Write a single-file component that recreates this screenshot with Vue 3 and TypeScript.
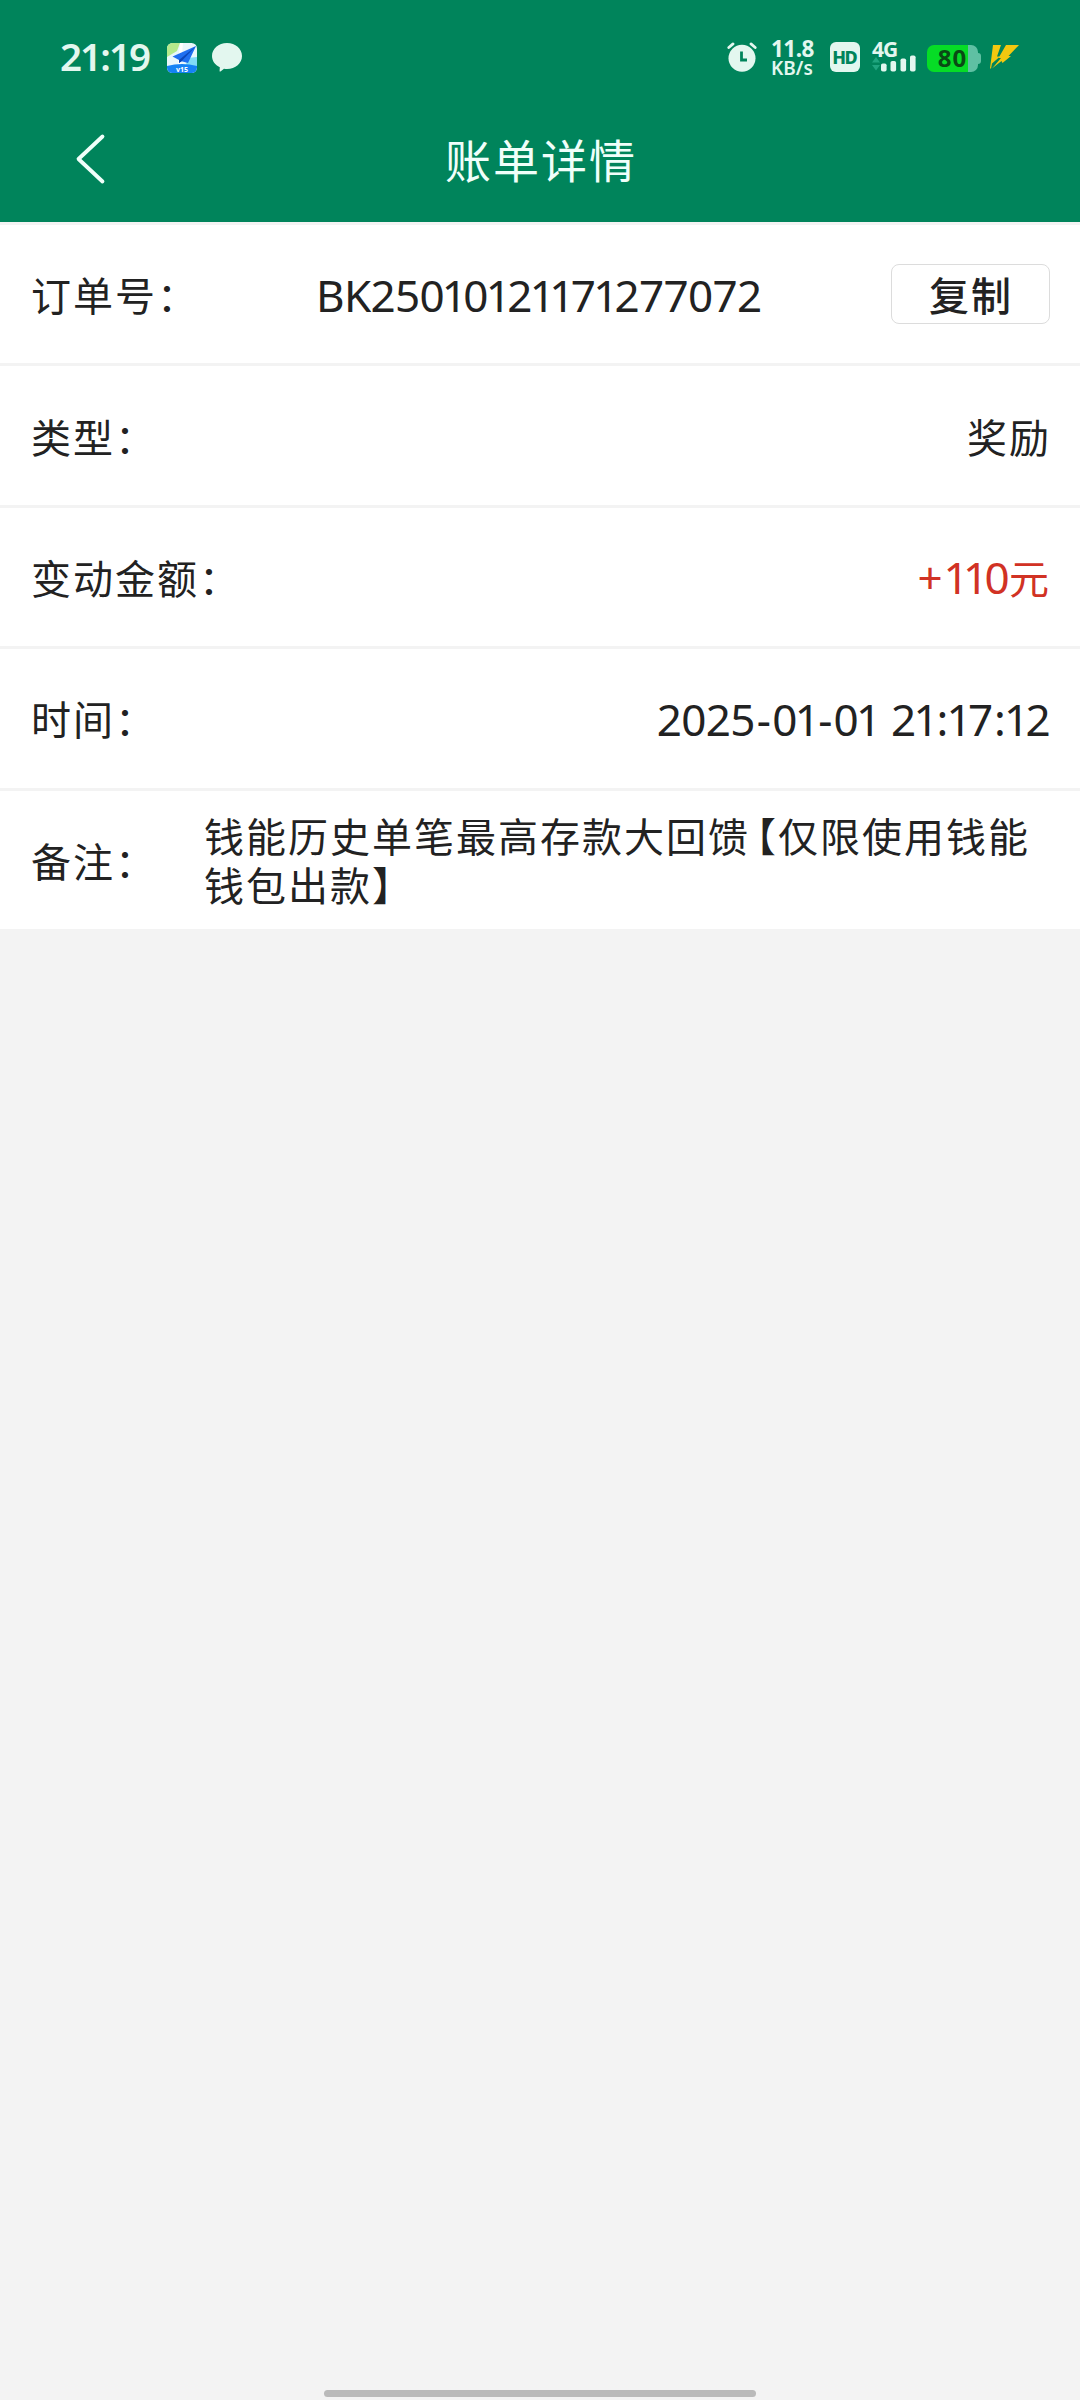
<script setup lang="ts">
interface Glyph {
  char: string
  kind: string[]
}

interface Row {
  label: string
  value: string
  tone?: 'red'
}

// Proportional figures: "1" takes a narrower advance, punctuation a wider one.
function glyphs(text: string): Glyph[] {
  const chars = Array.from(text)
  return chars.map((char, i) => {
    const kind: string[] = []
    if (char === '1') kind.push(chars[i + 1] === '1' ? 'one-one' : 'one')
    else if (/[0-9]/.test(char) && chars[i + 1] === '1') kind.push('before-one')
    if (char === '-') kind.push('dash')
    if (char === ':') kind.push('colon')
    if (char === ' ') kind.push('space')
    if (char === '+') kind.push('plus')
    if (/[一-龥]/.test(char)) kind.push('cjk')
    return { char, kind }
  })
}

const orderNo = 'BK25010121171277072'
const rows: Row[] = [
  { label: '类型：', value: '奖励' },
  { label: '变动金额：', value: '+110元', tone: 'red' },
  { label: '时间：', value: '2025-01-01 21:17:12' },
]
</script>

<template>
  <div class="screen">
    <header class="top">
      <div class="status">
        <div class="status-left">
          <span class="clock">21:19</span>
          <svg class="app-icon" width="30" height="30" viewBox="0 0 30 30">
            <defs>
              <clipPath id="tile"><rect width="30" height="30" rx="5.500" /></clipPath>
            </defs>
            <g clip-path="url(#tile)">
              <rect width="30" height="30" fill="#e9f7fb" />
              <path d="M0 0h13L10 8 0 14z" fill="#b4ea8c" />
              <path d="M13 0h3l-2 22h-3z" fill="#fff" />
              <path d="M20 15l10-1v9H19z" fill="#7fdcf7" />
              <path d="M0 23q15-4 30 0v7H0z" fill="#1583f5" />
              <path d="M29 3L5.500 13.500l6.500 3.500v3l2.500-1.800L21 20z" fill="#1f6ff0" />
              <path d="M29 3L12 17v3l2.500-1.800z" fill="#0b47b8" />
            </g>
            <text x="15" y="28.600" class="tile-text">v15</text>
          </svg>
          <svg class="bubble" width="30" height="29" viewBox="0 0 30 29">
            <path d="M15 0C23.500 0 30 5.700 30 13S23.500 26 15 26q-1.500 0-3-.3L8.500 28.400q-1 .5-.9-.7l.2-3.500C3.200 22 0 18 0 13 0 5.700 6.500 0 15 0z" fill="#e3f7ef" />
          </svg>
        </div>
        <div class="status-right">
          <svg class="alarm" width="30" height="30" viewBox="0 0 30 30">
            <circle cx="15" cy="16.200" r="13.500" fill="#e3f7ef" />
            <path d="M1.800 5.500L6 1.900M28.200 5.500L24 1.900" stroke="#e3f7ef" stroke-width="2.800" stroke-linecap="round" />
            <path d="M14.500 9.500v8.500H20" stroke="#00845b" stroke-width="2.800" fill="none" />
          </svg>
          <div class="speed">
            <span class="speed-num">11.8</span>
            <span class="speed-unit">KB/s</span>
          </div>
          <div class="hd">HD</div>
          <div class="signal">
            <span class="net">4G</span>
            <svg class="bars" width="44" height="17" viewBox="0 0 44 17">
              <path d="M0 7.500L4 2l4 5.500zM0 10l4 5.500L8 10z" fill="#1fa57f" />
              <g fill="#e3f7ef">
                <rect x="9" y="8.500" width="5.600" height="8" rx="1.800" />
                <rect x="18.500" y="6" width="5.600" height="10.500" rx="1.800" />
                <rect x="28.500" y="3.500" width="5.600" height="13" rx="1.800" />
                <rect x="38" y=".5" width="5.600" height="16" rx="1.800" />
              </g>
            </svg>
          </div>
          <div class="battery">
            <div class="cell"><span class="level">80</span></div>
            <div class="nub"></div>
          </div>
          <svg class="bolt" width="30" height="26" viewBox="0 0 30 26">
            <path d="M4 1h8L8 12.500h3L3 19.500 2 24.500H1z" fill="#f3c80f" />
            <path d="M17 1h13L19.500 12H22l-8.500 7-1-2L3 24.500l9-10.500H9.500z" fill="#f3c80f" />
          </svg>
        </div>
      </div>
      <nav class="nav">
        <svg class="back" width="32" height="54" viewBox="0 0 32 54">
          <path d="M28.500 4.500L4.500 27l24 22.500" fill="none" stroke="#f0fffa" stroke-width="3.800" stroke-linecap="round" stroke-linejoin="round" />
        </svg>
        <h1 class="title">账单详情</h1>
        <span class="nav-end"></span>
      </nav>
    </header>

    <main class="list">
      <section class="row">
        <span class="label">订单号：</span>
        <span class="order"><span v-for="(g, i) in glyphs(orderNo)" :key="i" :class="g.kind">{{ g.char }}</span></span>
        <button class="copy" type="button">复制</button>
      </section>
      <section v-for="row in rows" :key="row.label" class="row">
        <span class="label">{{ row.label }}</span>
        <span class="value" :class="row.tone"><span v-for="(g, i) in glyphs(row.value)" :key="i" :class="g.kind">{{ g.char }}</span></span>
      </section>
      <section class="row">
        <span class="label">备注：</span>
        <p class="remark">钱能历史单笔最高存款大回<span class="tight">馈</span>【仅限使用钱能<br />钱包出款】</p>
      </section>
    </main>

    <footer class="home"><span class="home-bar"></span></footer>
  </div>
</template>

<style>
body {
  background: #f3f3f3;
}
</style>

<style scoped>
.screen {
  display: flex;
  flex-direction: column;
  width: 1080px;
  height: 2400px;
  background: #f3f3f3;
  color: #222;
  font-family: "Noto Sans", "Noto Sans CJK SC", sans-serif;
}

.top {
  height: 222px;
  background: #00845b;
  color: #f0fffa;
}

.status {
  display: flex;
  justify-content: space-between;
  height: 100px;
  padding: 0 61px 0 60px;
  box-sizing: border-box;
  color: #e3f7ef;
}

.status-left,
.status-right {
  display: flex;
  align-items: flex-start;
}

.clock {
  width: 107px;
  margin-top: 31px;
  font-size: 38.500px;
  font-weight: 600;
  line-height: 50px;
  letter-spacing: -1.900px;
  white-space: nowrap;
}

.app-icon {
  margin-top: 43px;
}

.tile-text {
  fill: #fff;
  font-size: 7px;
  font-weight: 700;
  text-anchor: middle;
}

.bubble {
  margin: 43px 0 0 15px;
}

.alarm {
  margin-top: 42px;
}

.speed {
  display: flex;
  flex-direction: column;
  width: 44px;
  margin: 38px 0 0 14px;
  white-space: nowrap;
}

.speed-num {
  font-size: 22.500px;
  font-weight: 700;
  line-height: 21px;
  letter-spacing: -0.500px;
}

.speed-unit {
  font-size: 19px;
  font-weight: 600;
  line-height: 18px;
}

.hd {
  width: 30px;
  height: 30px;
  margin: 42px 0 0 15px;
  border-radius: 6px;
  background: #e3f7ef;
  color: #00845b;
  font-size: 18px;
  font-weight: 800;
  line-height: 30px;
  letter-spacing: -1.500px;
  text-align: center;
  text-indent: -1.500px;
}

.signal {
  display: flex;
  flex-direction: column;
  width: 44px;
  margin: 39px 0 0 12px;
}

.net {
  height: 16px;
  font-size: 21px;
  font-weight: 700;
  line-height: 21px;
  letter-spacing: -1px;
}

.bars {
  display: block;
}

.battery {
  display: flex;
  align-items: center;
  margin: 45px 0 0 11px;
}

.cell {
  width: 51px;
  height: 27px;
  border-radius: 7px;
  background: linear-gradient(to right, #06dc26 41px, #5fc0a3 41px);
  text-align: center;
}

.level {
  display: block;
  color: #0a4a14;
  font-size: 24px;
  font-weight: 700;
  line-height: 26px;
  letter-spacing: 1px;
}

.nub {
  width: 3px;
  height: 11px;
  border-radius: 0 3px 3px 0;
  background: #5fc0a3;
}

.bolt {
  margin: 44px 0 0 8px;
}

.nav {
  display: flex;
  align-items: center;
  justify-content: space-between;
  height: 118px;
  padding: 0 74px;
}

.title {
  margin: -2px 0 0 2px;
  font-family: "Noto Sans CJK SC", sans-serif;
  font-size: 46px;
  font-weight: 400;
  line-height: 60px;
  letter-spacing: 2px;
}

.nav-end {
  width: 32px;
}

.row {
  display: flex;
  align-items: center;
  height: 141.400px;
  padding: 0 30px 0 31px;
  box-sizing: border-box;
  border-top: 3px solid #f3f3f3;
  background: #fff;
}

.label,
.remark,
.value .cjk {
  font-family: "Noto Sans CJK SC", sans-serif;
  font-size: 40px;
  letter-spacing: 2px;
}

.value .cjk:last-child {
  letter-spacing: 1px;
}

.label {
  line-height: 50px;
  white-space: nowrap;
}

.order,
.value {
  padding-top: 1px;
  font-size: 44px;
  line-height: 60px;
  letter-spacing: -0.700px;
  white-space: pre;
}

.order {
  margin-left: 117px;
}

.value {
  margin-left: auto;
}

.red {
  color: #d13224;
}

.before-one {
  letter-spacing: -2.700px;
}

.one {
  letter-spacing: -3.700px;
}

.one-one {
  letter-spacing: -5.700px;
}

.plus {
  letter-spacing: 1px;
}

.dash {
  margin: 0 2px;
}

.colon {
  margin: 0 -1px 0 1.500px;
}

.space {
  letter-spacing: 2px;
}

.copy {
  width: 159px;
  height: 60px;
  margin-left: auto;
  padding: 0 0 0 1px;
  border: 1px solid #dcdcdc;
  border-radius: 8px;
  background: #fff;
  color: #222;
  font-family: "Noto Sans CJK SC", sans-serif;
  font-size: 40px;
  font-weight: 500;
  line-height: 56px;
  letter-spacing: 2px;
}

.remark {
  margin: 0 0 0 47px;
  line-height: 49px;
  white-space: nowrap;
}

.remark .tight {
  letter-spacing: -12px;
}

.home {
  display: flex;
  justify-content: center;
  margin-top: auto;
  padding-bottom: 3px;
}

.home-bar {
  width: 432px;
  height: 7px;
  border-radius: 4px;
  background: #bababa;
}
</style>
